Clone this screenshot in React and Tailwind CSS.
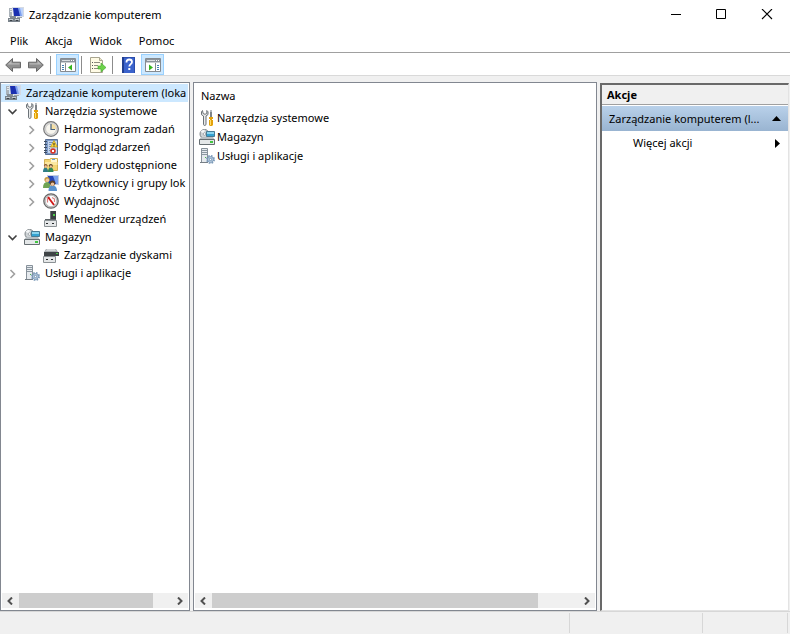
import React, { useState } from 'react';
import { clsx } from 'clsx';

const ComputerIcon = () => (
  <svg className="w-4 h-4 shrink-0" viewBox="0 0 16 16" aria-hidden="true">
    <path d="M1 1h3v9H1z" fill="#aab2b9" />
    <path d="M2 2h2v1H2zM2 4h2v1H2z" fill="#e6eaed" />
    <path d="M4 0h12v10H5z" fill="#d5dae3" />
    <path d="M5 1h10v8H6z" fill="#1a2fb0" />
    <path d="M10 1h5v8h-3z" fill="#7d9fee" />
    <path d="M12 1h3v8h-1z" fill="#bcd2fa" />
    <path d="M9 10h5v1H9z" fill="#9aa3ab" />
    <path d="M2 9h6v2H2z" fill="#858d94" />
    <path d="M0 11h12v4H0z" fill="#7a838b" />
    <path d="M1 12h4v1H1zM7 12h4v1H7z" fill="#c3c9ce" />
    <path d="M2 13h2v1H2zM8 13h2v1H8z" fill="#3a4147" />
  </svg>
);

const ToolsIcon = () => (
  <svg className="w-4 h-4 shrink-0" viewBox="0 0 16 16" aria-hidden="true">
    <path
      d="M3.500.5 2.500 1.800v2.900L4.500 6v8.200c0 .9.6 1.300 1.200 1.300s1.300-.4 1.300-1.300V6l2-1.400V1.800L7.800.5v3L6 4.300l-1.900-.8z"
      fill="#e8eaeb"
      stroke="#6c7378"
    />
    <path d="M11 1h2v7h-2z" fill="#7d8388" />
    <path d="M11 0h2v2h-2z" fill="#b5babe" />
    <path d="M10 7h4v2h-1v1h1v5l-1 1h-2l-1-1v-5h1V9h-1z" fill="#e3a20b" />
    <path d="M11 10h1v5h-1z" fill="#ffdc6b" />
  </svg>
);

const ClockIcon = () => (
  <svg className="w-4 h-4 shrink-0" viewBox="0 0 16 16" aria-hidden="true">
    <circle cx="8" cy="8" r="7.300" fill="#dcdcdc" stroke="#777" strokeWidth="1.200" />
    <circle cx="8" cy="8" r="5.400" fill="#f7f5ee" stroke="#b5b5b5" strokeWidth=".6" />
    <path d="M8 8V2.800A5.200 5.200 0 0 1 13.200 8z" fill="#f5dfa5" />
    <path d="M8 3v5.500h4" fill="none" stroke="#47627f" strokeWidth="1.200" />
  </svg>
);

const EventsIcon = () => (
  <svg className="w-4 h-4 shrink-0" viewBox="0 0 16 16" aria-hidden="true">
    <path d="M2.500.5h12v15h-12z" fill="#7f9cc9" stroke="#5a7196" />
    <path d="M5 2h9v12H5z" fill="#c5d5ec" />
    <path d="M6 3.500h4M6 5.500h2M6 7.500h2M6 9.500h1M6 11.500h1" stroke="#7791b6" />
    <path d="M1 2.500h3M1 5.500h3M1 8.500h3M1 11.500h3M1 13.500h3" stroke="#3d4c61" />
    <path d="m11 1.500 3.500 6.500h-7z" fill="#ffd83d" stroke="#b48a00" strokeWidth=".6" />
    <path d="M10.500 4h1v2h-1zM10.500 6.500h1v1h-1z" fill="#222" />
    <circle cx="10" cy="12" r="2.800" fill="#d8372b" />
    <path d="m9 11 2 2m0-2-2 2" stroke="#fff" />
  </svg>
);

const SharedFolderIcon = () => (
  <svg className="w-4 h-4 shrink-0" viewBox="0 0 16 16" aria-hidden="true">
    <path d="M1.500 2.500h5l1-1h7v12h-13z" fill="#f3d573" stroke="#c7a13c" strokeWidth=".8" />
    <path d="M8 2h6v3H8z" fill="#fff6d0" />
    <path d="M9 2h3v1H9z" fill="#5d9fd5" />
    <path d="M2 5h12.500v3H2z" fill="#fbe7a1" />
    <path d="M0 15c0-3 1-4.500 2.500-4.500S5 12 5 15z" fill="#2f7d86" />
    <circle cx="2.700" cy="8.800" r="1.800" fill="#845330" />
    <circle cx="2.700" cy="9.500" r="1.200" fill="#efc39b" />
    <path d="M5 15c0-3 1-4.500 2.700-4.500S10.500 12 10.500 15z" fill="#2f8a5a" />
    <circle cx="7.800" cy="8.800" r="1.900" fill="#553a22" />
    <circle cx="7.800" cy="9.500" r="1.200" fill="#efc39b" />
  </svg>
);

const UsersIcon = () => (
  <svg className="w-4 h-4 shrink-0" viewBox="0 0 16 16" aria-hidden="true">
    <path d="M4 0h12v10H4z" fill="#c5cde0" />
    <path d="M5 1h10v8H5z" fill="#2545b8" />
    <path d="M10 1h5v8h-2z" fill="#7ba1ec" />
    <path d="M0 13c0-4 1.500-6 4-6s3.500 2 3.500 6z" fill="#6fa353" />
    <circle cx="4" cy="4.500" r="2.600" fill="#c79a3f" />
    <circle cx="4.400" cy="5.300" r="1.700" fill="#f0c79d" />
    <path d="M5.500 16c0-4 1.500-5.500 4-5.500s4.500 1.500 4.500 5.500z" fill="#5b93cd" />
    <circle cx="9.500" cy="8.200" r="2.700" fill="#5f4127" />
    <circle cx="9.500" cy="9.200" r="1.800" fill="#efc39b" />
  </svg>
);

const PerformanceIcon = () => (
  <svg className="w-4 h-4 shrink-0" viewBox="0 0 16 16" aria-hidden="true">
    <circle cx="8" cy="8" r="7.200" fill="#d4d4d4" stroke="#686868" strokeWidth="1.300" />
    <circle cx="8" cy="8" r="5.700" fill="#fff" stroke="#999" strokeWidth=".6" />
    <path d="M4.500 9.500V6l2-2M9 4.500l2.500 1.500v3" fill="none" stroke="#d98080" strokeWidth="1.200" />
    <path d="m5 4 6 8" stroke="#cf1717" strokeWidth="1.800" />
  </svg>
);

const DeviceIcon = () => (
  <svg className="w-4 h-4 shrink-0" viewBox="0 0 16 16" aria-hidden="true">
    <path d="M7 0h6v9H7z" fill="#3b4043" />
    <path d="M7 0h1v9H7z" fill="#6c7275" />
    <path d="M10 3h2v2h-2z" fill="#4fce4b" />
    <path d="M2 8h11v2H2z" fill="#606669" />
    <path d="M1.500 9.500h12v6h-12z" fill="#e5e7e8" stroke="#8b9194" />
    <path d="M3 12h2v1H3zM9 12h2v1H9z" fill="#24282a" />
  </svg>
);

const StorageIcon = () => (
  <svg className="w-4 h-4 shrink-0" viewBox="0 0 16 16" aria-hidden="true">
    <circle cx="5.500" cy="5" r="4.500" fill="#cfd4d7" stroke="#7b8286" />
    <path d="M5.500 5 1.500 2.500A5 5 0 0 1 5.500.8z" fill="#f4f6f7" />
    <circle cx="5.500" cy="5" r="1.300" fill="#fff" stroke="#899095" strokeWidth=".7" />
    <path d="M7.500 2.500h8v5h-8z" fill="#35a3d2" stroke="#477b94" />
    <path d="M8 3h7v2H8z" fill="#8ad4ee" />
    <path d="M2 8h12l2 3H0z" fill="#b9bfc3" />
    <path d="M.5 10.500h15v5H.5z" fill="#e4e7e8" stroke="#666e72" />
    <path d="M11 12h3v2h-3z" fill="#42c641" />
  </svg>
);

const DiskIcon = () => (
  <svg className="w-4 h-4 shrink-0" viewBox="0 0 16 16" aria-hidden="true">
    <path d="M3 2h10l2 3v4H1V5z" fill="#a9aeb1" />
    <path d="M4 2h8l1 2H3z" fill="#d3d6d8" />
    <path d="M1 5h15v4H1z" fill="#3f4447" />
    <path d="M13 6h2v1h-2z" fill="#4fce4b" />
    <path d="M.5 9.500h12v6H.5z" fill="#e5e7e8" stroke="#8b9194" />
    <path d="M3 12h2v1H3zM8 12h2v1H8z" fill="#24282a" />
  </svg>
);

const ServicesIcon = () => (
  <svg className="w-4 h-4 shrink-0" viewBox="0 0 16 16" aria-hidden="true">
    <path d="M2.500.5h6v14h-6z" fill="#e6eaee" stroke="#87919a" />
    <path d="M3 2.500h5M3 4.500h5M3 6.500h5" stroke="#8b97a0" />
    <path d="M6 9h1v1H6z" fill="#47b949" />
    <path d="M1 14h8v1H1z" fill="#777f86" />
    <circle cx="11.500" cy="11.500" r="3.600" fill="none" stroke="#7f9dbb" strokeWidth="1.800" strokeDasharray="1.600 1.230" />
    <circle cx="11.500" cy="11.500" r="2.900" fill="#c5d8ea" stroke="#6787a8" strokeWidth=".8" />
    <circle cx="11.500" cy="11.500" r="1.200" fill="#fff" stroke="#587b9e" strokeWidth=".8" />
  </svg>
);

const ArrowIcon = ({ flip }) => (
  <svg className={clsx('w-4 h-4', flip && '-scale-x-100')} viewBox="0 0 16 16" aria-hidden="true">
    <path d="M.7 8 7.500 1.500v3.700h8v5.600h-8v3.700z" fill="#8f8f8f" stroke="#686868" />
    <path d="M2.500 7.500 6.500 3.700v2.500h8v1.300z" fill="#b9b9b9" />
  </svg>
);

const PaneIcon = ({ right }) => (
  <svg className="w-4 h-4" viewBox="0 0 16 16" aria-hidden="true">
    <path d="M.5 1.500h15v13H.5z" fill="#fff" stroke="#858b91" />
    <path d="M1 2h14v3H1z" fill="#8b939b" />
    <path d="M2 3h8v1H2z" fill="#d9dde1" />
    <path d="M11 3h1v1h-1zM13 3h1v1h-1z" fill="#fff" />
    <path d="M1 5h14v1H1z" fill="#c9cdd1" />
    <path d={right ? 'M10.500 6v8' : 'M5.500 6v8'} stroke="#858b91" />
    <path d={right ? 'M12 8.500h2M12 10.500h2M12 12.500h2' : 'M2 8.500h2M2 10.500h2M2 12.500h2'} stroke="#4480b5" />
    <path d={right ? 'm4 7.500 4 3-4 3z' : 'm12 7.500-4 3 4 3z'} fill="#35b51f" />
  </svg>
);

const ExportIcon = () => (
  <svg className="w-4 h-4" viewBox="0 0 16 16" aria-hidden="true">
    <path d="M.5.5h9l3 3v12H.5z" fill="#fffbe5" stroke="#a9a590" />
    <path d="M9.500.5v3h3" fill="#eae5c8" stroke="#a9a590" />
    <path d="M2 5.500h1M2 8.500h1M2 11.500h1" stroke="#555" />
    <path d="M4 5.500h6M4 8.500h4M4 11.500h4" stroke="#8f8d80" />
    <path d="M8 9h3V6l5 4.500-5 4.500v-3H8z" fill="#6dd34b" stroke="#42a52b" strokeWidth=".6" />
  </svg>
);

const HelpIcon = () => (
  <svg className="w-4 h-4" viewBox="0 0 16 16" aria-hidden="true">
    <path d="M2 0h13v16H2z" fill="#3b63cc" />
    <path d="M2 0h2v16H2z" fill="#213f91" />
    <path d="M4 0h11v1H4zM14 1h1v15h-1z" fill="#2b4dac" />
    <path
      d="M6.500 5.500V5c0-1.500 1-2.500 2.700-2.500S12 3.400 12 5c0 2-2.700 2.300-2.700 4.500"
      fill="none"
      stroke="#fff"
      strokeWidth="1.800"
    />
    <path d="M8.300 11h2v2h-2z" fill="#fff" />
  </svg>
);

const Chevron = ({ open }) => (
  <svg className="w-4 h-4 shrink-0" viewBox="0 0 16 16" fill="none" aria-hidden="true">
    {open ? (
      <path d="m3.500 6.500 4 4 4-4" stroke="#404040" strokeWidth="1.600" />
    ) : (
      <path d="m5.500 5 4 4-4 4" stroke="#a0a0a0" strokeWidth="1.600" />
    )}
  </svg>
);

const MENU = ['Plik', 'Akcja', 'Widok', 'Pomoc'];

const TREE = [
  { label: 'Zarządzanie komputerem (loka', icon: ComputerIcon, level: 0 },
  { label: 'Narzędzia systemowe', icon: ToolsIcon, level: 1, state: 'open' },
  { label: 'Harmonogram zadań', icon: ClockIcon, level: 2, state: 'closed' },
  { label: 'Podgląd zdarzeń', icon: EventsIcon, level: 2, state: 'closed' },
  { label: 'Foldery udostępnione', icon: SharedFolderIcon, level: 2, state: 'closed' },
  { label: 'Użytkownicy i grupy lok', icon: UsersIcon, level: 2, state: 'closed' },
  { label: 'Wydajność', icon: PerformanceIcon, level: 2, state: 'closed' },
  { label: 'Menedżer urządzeń', icon: DeviceIcon, level: 2 },
  { label: 'Magazyn', icon: StorageIcon, level: 1, state: 'open' },
  { label: 'Zarządzanie dyskami', icon: DiskIcon, level: 2 },
  { label: 'Usługi i aplikacje', icon: ServicesIcon, level: 1, state: 'closed' },
];

const ITEMS = [
  { label: 'Narzędzia systemowe', icon: ToolsIcon },
  { label: 'Magazyn', icon: StorageIcon },
  { label: 'Usługi i aplikacje', icon: ServicesIcon },
];

const INDENT = ['pl-1', 'pl-1', 'pl-[23px]'];

const Separator = () => <div className="w-px h-[18px] bg-[#8c8c8c]" />;

const TitleBar = () => (
  <header className="flex items-center h-[30px] pl-2 shrink-0">
    <ComputerIcon />
    <h1 className="flex-1 pl-[5px]">Zarządzanie komputerem</h1>
    <button aria-label="Minimalizuj" className="w-[46px] h-full flex items-center justify-center">
      <svg className="w-3 h-3" viewBox="0 0 12 12" aria-hidden="true">
        <path d="M2 5.500h10" stroke="#000" />
      </svg>
    </button>
    <button aria-label="Maksymalizuj" className="w-[46px] h-full flex items-center justify-center">
      <svg className="w-3 h-3" viewBox="0 0 12 12" aria-hidden="true">
        <path d="M1.500.5h9v9h-9z" fill="none" stroke="#000" />
      </svg>
    </button>
    <button aria-label="Zamknij" className="w-[46px] h-full flex items-center justify-center">
      <svg className="w-3 h-3" viewBox="0 0 12 12" aria-hidden="true">
        <path d="m1 0 10 10M11 0 1 10" stroke="#000" strokeWidth="1.100" />
      </svg>
    </button>
  </header>
);

const Toolbar = () => (
  <div className="flex items-center h-6 shrink-0 pt-px pl-[5px] border-t border-t-[#a0a0a0] border-b border-b-[#d9d9d9]">
    <div className="flex gap-[7px] mr-1.5">
      <button aria-label="Wstecz"><ArrowIcon /></button>
      <button aria-label="Dalej"><ArrowIcon flip /></button>
    </div>
    <Separator />
    <button
      aria-label="Pokaż drzewo konsoli"
      className="w-[23px] h-[21px] ml-[5px] mr-0.5 flex items-center justify-center bg-[#cce8ff] border border-[#99d1ff]"
    >
      <PaneIcon />
    </button>
    <Separator />
    <button aria-label="Eksportuj listę" className="ml-2 mr-1.5"><ExportIcon /></button>
    <Separator />
    <button aria-label="Pomoc" className="ml-[7px] mr-[5px]"><HelpIcon /></button>
    <button
      aria-label="Pokaż okienko akcji"
      className="w-[23px] h-[21px] flex items-center justify-center bg-[#cce8ff] border border-[#99d1ff]"
    >
      <PaneIcon right />
    </button>
  </div>
);

const ScrollBar = ({ thumb }) => (
  <div className="flex h-[15px] mx-px mb-0.5 bg-[#f0f0f0] shrink-0">
    <button aria-label="Przewiń w lewo" className="w-[17px] pr-px flex items-center justify-center">
      <svg className="w-2 h-2" viewBox="0 0 8 8" fill="none" aria-hidden="true">
        <path d="M6 .5 2.500 4 6 7.500" stroke="#505050" strokeWidth="2" />
      </svg>
    </button>
    <div className="flex-1">
      <div className="h-full bg-[#cdcdcd]" style={{ width: `${thumb}%` }} />
    </div>
    <button aria-label="Przewiń w prawo" className="w-[17px] flex items-center justify-center">
      <svg className="w-2 h-2" viewBox="0 0 8 8" fill="none" aria-hidden="true">
        <path d="M2 .5 5.500 4 2 7.500" stroke="#505050" strokeWidth="2" />
      </svg>
    </button>
  </div>
);

const TreePanel = ({ selected, onSelect }) => (
  <nav className="w-[190px] shrink-0 flex flex-col bg-white border border-[#828790]">
    <ul className="flex-1 pt-px pr-px overflow-hidden">
      {TREE.map(({ label, icon: Icon, level, state }) => (
        <li key={label}>
          <button
            onClick={() => onSelect(label)}
            className={clsx(
              'w-full h-[18px] flex items-center overflow-hidden whitespace-nowrap',
              INDENT[level],
              selected === label && 'bg-[#cce8ff]'
            )}
          >
            {level > 0 && (
              <span className="w-[19px] shrink-0">{state && <Chevron open={state === 'open'} />}</span>
            )}
            <Icon />
            <span className="pl-[5px]">{label}</span>
          </button>
        </li>
      ))}
    </ul>
    <ScrollBar thumb={88} />
  </nav>
);

const ListPanel = () => (
  <main className="flex-1 min-w-0 flex flex-col bg-white border border-[#828790]">
    <div className="flex-1 pt-px">
      <table className="w-full text-left">
        <thead>
          <tr>
            <th className="h-6 pl-[7px] font-normal">Nazwa</th>
          </tr>
        </thead>
        <tbody>
          {ITEMS.map(({ label, icon: Icon }) => (
            <tr key={label}>
              <td className="h-[19px] pl-[5px]">
                <div className="flex items-center gap-[2px]">
                  <Icon />
                  {label}
                </div>
              </td>
            </tr>
          ))}
        </tbody>
      </table>
    </div>
    <ScrollBar thumb={89} />
  </main>
);

const ActionsPanel = () => (
  <aside className="w-[189px] shrink-0 mr-px mt-px flex flex-col bg-white border-t-2 border-l-2 border-t-[#696969] border-l-[#696969] border-r border-b border-r-[#e3e3e3] border-b-[#e3e3e3]">
    <h2 className="h-5 flex items-center pl-[5px] font-bold bg-[#f0f0f0] border-b border-[#a0a0a0]">Akcje</h2>
    <button className="mt-px h-[25px] flex items-center justify-between pl-[7px] pr-[7px] bg-linear-to-b from-[#b9d1ea] to-[#99b4d1]">
      <span className="truncate">Zarządzanie komputerem (l...</span>
      <svg className="w-[9px] h-[5px] shrink-0" viewBox="0 0 9 5" aria-hidden="true">
        <path d="M4.500 0 9 5H0z" />
      </svg>
    </button>
    <button className="h-6 flex items-center justify-between pl-[31px] pr-2">
      Więcej akcji
      <svg className="w-[5px] h-[9px]" viewBox="0 0 5 9" aria-hidden="true">
        <path d="M0 0v9l5-4.500z" />
      </svg>
    </button>
  </aside>
);

const App = () => {
  const [selected, setSelected] = useState(TREE[0].label);

  return (
    <div className="h-screen flex flex-col bg-white text-black text-[11px] leading-4 font-['Noto_Sans','Open_Sans',sans-serif]">
      <TitleBar />
      <nav className="flex items-center gap-px h-[22px] pl-0.5 shrink-0">
        {MENU.map((item) => (
          <button key={item} className="px-2">{item}</button>
        ))}
      </nav>
      <Toolbar />
      <div className="flex-1 min-h-0 flex gap-[3px] pt-1.5 bg-[#f0f0f0]">
        <TreePanel selected={selected} onSelect={setSelected} />
        <ListPanel />
        <ActionsPanel />
      </div>
      <footer className="flex h-[23px] py-px shrink-0 bg-[#f0f0f0] border-t border-[#d7d7d7]">
        <div className="flex-1 border-r border-[#d7d7d7]" />
        <div className="w-[133px] border-r border-[#d7d7d7]" />
        <div className="w-[85px] mr-0.5 border-r border-[#d7d7d7]" />
      </footer>
    </div>
  );
};

export default App;
